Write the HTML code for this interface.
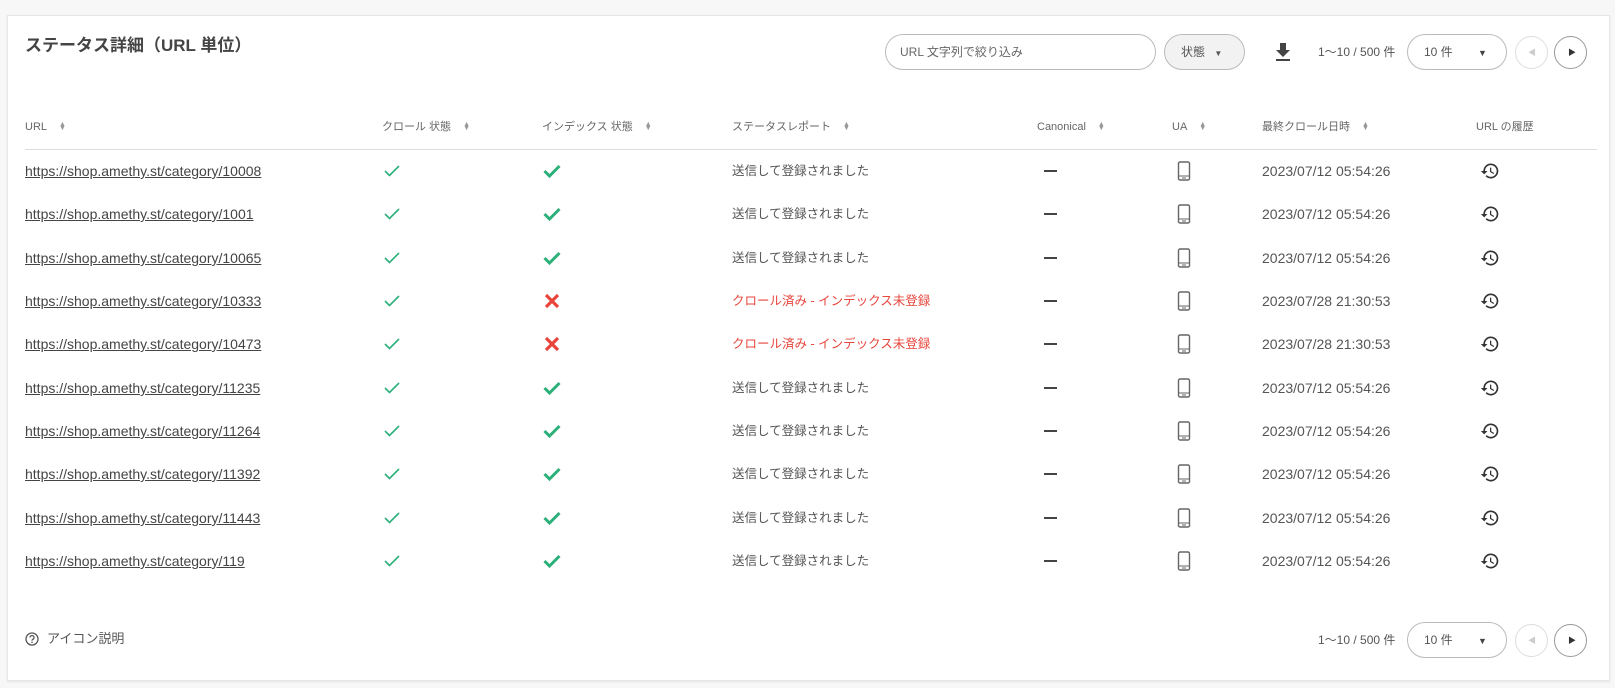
<!DOCTYPE html>
<html><head><meta charset="utf-8"><style>
body{margin:0;width:1615px;height:688px;background:#f7f7f7;font-family:"Liberation Sans","Noto Sans CJK JP",sans-serif;color:#444;position:relative;overflow:hidden}
.card{position:absolute;left:7px;top:15px;width:1601px;height:664px;background:#fff;border:1px solid #e6e6e6;box-shadow:0 1px 2px rgba(0,0,0,.08)}
.a{position:absolute;white-space:nowrap;line-height:16px}
h1{position:absolute;left:25px;top:34px;margin:0;font-size:17px;line-height:24px;font-weight:bold;color:#444}
.hd{font-size:11px;color:#666;top:119px}
.sort{display:inline-block;margin-left:12px;font-size:7px;color:#999;line-height:4px;vertical-align:middle}
.line{position:absolute;left:25px;top:149px;width:1572px;height:1px;background:#ddd}
.url{font-size:14px;color:#444;text-decoration:underline;left:25px}
.txt{font-size:12.5px;color:#555}
.red{color:#e8453c}
.btn{position:absolute;border:1px solid #bbb;border-radius:19px;box-sizing:border-box}
.circ{position:absolute;width:33px;height:33px;border:1px solid #999;border-radius:50%;box-sizing:border-box}
</style></head><body>
<div class="card"></div>
<h1>ステータス詳細（URL 単位）</h1>
<div class="btn" style="left:885px;top:34px;width:271px;height:36px"><span class="a" style="left:14px;top:9px;font-size:12px;color:#666">URL 文字列で絞り込み</span></div>
<div class="btn" style="left:1164px;top:34px;width:81px;height:36px;background:#f2f2f2"><span class="a" style="left:16px;top:9px;font-size:12px;color:#555">状態 <span style="font-size:8px;margin-left:6px">▼</span></span></div>
<svg class="a" style="left:1274px;top:42px" width="18" height="20" viewBox="0 0 18 20"><path d="M6 1h6v7h4l-7 7-7-7h4z" fill="#444"/><rect x="2" y="17" width="14" height="2" fill="#444"/></svg>
<div id="pg1"></div>
<div class="line"></div>
<div class="a hd" style="left:25px">URL<span class="sort">▲<br>▼</span></div>
<div class="a hd" style="left:382px">クロール 状態<span class="sort">▲<br>▼</span></div>
<div class="a hd" style="left:542px">インデックス 状態<span class="sort">▲<br>▼</span></div>
<div class="a hd" style="left:732px">ステータスレポート<span class="sort">▲<br>▼</span></div>
<div class="a hd" style="left:1037px">Canonical<span class="sort">▲<br>▼</span></div>
<div class="a hd" style="left:1172px">UA<span class="sort">▲<br>▼</span></div>
<div class="a hd" style="left:1262px">最終クロール日時<span class="sort">▲<br>▼</span></div>
<div class="a hd" style="left:1476px">URL の履歴</div>
<div id="rows"></div>
<svg class="a" style="left:25px;top:632px" width="14" height="14" viewBox="0 0 14 14"><circle cx="7" cy="7" r="6" fill="none" stroke="#555" stroke-width="1.3"/><path d="M5 5.5a2 2 0 1 1 2.5 2c-.5.2-.5.6-.5 1.2" fill="none" stroke="#555" stroke-width="1.2"/><circle cx="7" cy="10.3" r=".8" fill="#555"/></svg>
<div class="a" style="left:47px;top:631px;font-size:13px;color:#555">アイコン説明</div>
<div id="pg2"></div>
<script>
function pg(y){return `<div class="a" style="left:1318px;top:${y+10}px;font-size:12px;color:#555">1〜10 / 500 件</div>
<div class="btn" style="left:1407px;top:${y}px;width:100px;height:36px"><span class="a" style="left:16px;top:9px;font-size:12px;color:#555">10 件</span><span class="a" style="left:70px;top:10px;font-size:9px;color:#444">▼</span></div>
<div class="circ" style="left:1515px;top:${y+2}px;border-color:#ddd"><span class="a" style="left:12px;top:8px;font-size:8px;color:#ccc">◀</span></div>
<div class="circ" style="left:1554px;top:${y+2}px"><span class="a" style="left:13px;top:8px;font-size:8px;color:#333">▶</span></div>`}
document.getElementById('pg1').outerHTML=pg(34);
document.getElementById('pg2').outerHTML=pg(622);
const ids=['10008','1001','10065','10333','10473','11235','11264','11392','11443','119'];
let h='';
ids.forEach((id,i)=>{const y=Math.round(171+43.35*i);const bad=(i==3||i==4);
h+=`<div class="a url" style="top:${y-8}px">https://shop.amethy.st/category/${id}</div>
<svg class="a" style="left:384px;top:${y-6}px" width="16" height="12" viewBox="0 0 16 12"><path d="M1 6l4.5 4.5L15 1" fill="none" stroke="#2bb07a" stroke-width="1.6"/></svg>`+
(bad?`<svg class="a" style="left:544px;top:${y-8}px" width="16" height="16" viewBox="0 0 16 16"><path d="M2 2l12 12M14 2L2 14" stroke="#e8453c" stroke-width="3.2"/></svg>
<div class="a txt red" style="left:732px;top:${y-8}px">クロール済み - インデックス未登録</div>`:
`<svg class="a" style="left:543px;top:${y-7}px" width="18" height="14" viewBox="0 0 18 14"><path d="M1.5 7l5 5L16.5 2" fill="none" stroke="#2bb07a" stroke-width="3"/></svg>
<div class="a txt" style="left:732px;top:${y-8}px">送信して登録されました</div>`)+
`<div class="a" style="left:1044px;top:${y-1}px;width:13px;height:2px;background:#444"></div>
<svg class="a" style="left:1177px;top:${y-10}px" width="14" height="20" viewBox="0 0 14 20"><rect x="1.5" y="1" width="11" height="18" rx="1.5" fill="none" stroke="#666" stroke-width="1.4"/><line x1="1.5" y1="15" x2="12.5" y2="15" stroke="#666" stroke-width="1"/><line x1="5" y1="17" x2="9" y2="17" stroke="#666"/></svg>
<div class="a txt" style="left:1262px;top:${y-8}px;font-size:14px">${bad?'2023/07/28 21:30:53':'2023/07/12 05:54:26'}</div>
<svg class="a" style="left:1480px;top:${y-10}px" width="20" height="20" viewBox="0 0 24 24"><path d="M13 3a9 9 0 0 0-9 9H1l3.9 3.9.1.1L9 12H6a7 7 0 1 1 2.05 4.95l-1.42 1.42A9 9 0 1 0 13 3zm-1 5v5l4.28 2.54.72-1.21-3.5-2.08V8H12z" fill="#333"/></svg>`;});
document.getElementById('rows').outerHTML=h;
</script>
</body></html>
